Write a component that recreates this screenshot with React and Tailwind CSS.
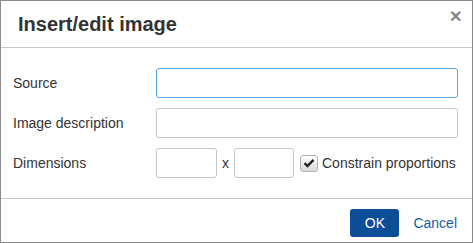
import React from 'react';

function Field({ label, children }) {
  return (
    <div className="flex items-center h-[30px]">
      <label className="w-[143px] text-[14px] text-[#333]">{label}</label>
      {children}
    </div>
  );
}

export default function App() {
  return (
    <div
      className="w-[473px] h-[243px] border border-[#8a8a8a] bg-white flex flex-col text-[#333]"
      style={{ fontFamily: '"Liberation Sans", Arial, sans-serif' }}
    >
      <div className="h-[47px] shrink-0 border-b border-[#c5c5c5] flex items-center justify-between pl-[17px] pr-[10px]">
        <h1 className="text-[20px] font-bold text-[#333] leading-none mt-[-1px]">Insert/edit image</h1>
        <button className="text-[#858585] text-[16px] font-bold leading-none mb-[14px]">✕</button>
      </div>

      <div className="flex-1 flex flex-col gap-[10px] pt-[20px] pl-[12px] pr-[14px]">
        <Field label="Source">
          <input className="flex-1 h-[30px] border border-[#59a5e5] rounded-[3px] outline-none px-1" />
        </Field>
        <Field label="Image description">
          <input className="flex-1 h-[30px] border border-[#c5c5c5] rounded-[3px] outline-none px-1" />
        </Field>
        <Field label="Dimensions">
          <input className="w-[61px] h-[30px] border border-[#c5c5c5] rounded-[3px] outline-none px-1" />
          <span className="w-[17px] text-center text-[14px]">x</span>
          <input className="w-[60px] h-[30px] border border-[#c5c5c5] rounded-[3px] outline-none px-1" />
          <span className="ml-[6px] w-[18px] h-[17px] border border-[#b1b1b1] rounded-[3px] bg-gradient-to-b from-white to-[#d9d9d9] flex items-center justify-center">
            <svg width="12" height="10" viewBox="0 0 12 10">
              <path d="M1.5 5.2 L4.5 8 L10.5 1.8" fill="none" stroke="#222" strokeWidth="2.4" />
            </svg>
          </span>
          <span className="ml-[4px] text-[14px]">Constrain proportions</span>
        </Field>
      </div>

      <div className="h-[44px] shrink-0 border-t border-[#c5c5c5] flex items-center justify-end gap-[14px] pr-[15px] pt-[5px]">
        <button className="w-[49px] h-[28px] rounded-[3px] bg-[#0b4d97] text-white text-[14px]">OK</button>
        <button className="text-[#1a5ba3] text-[14px]">Cancel</button>
      </div>
    </div>
  );
}
